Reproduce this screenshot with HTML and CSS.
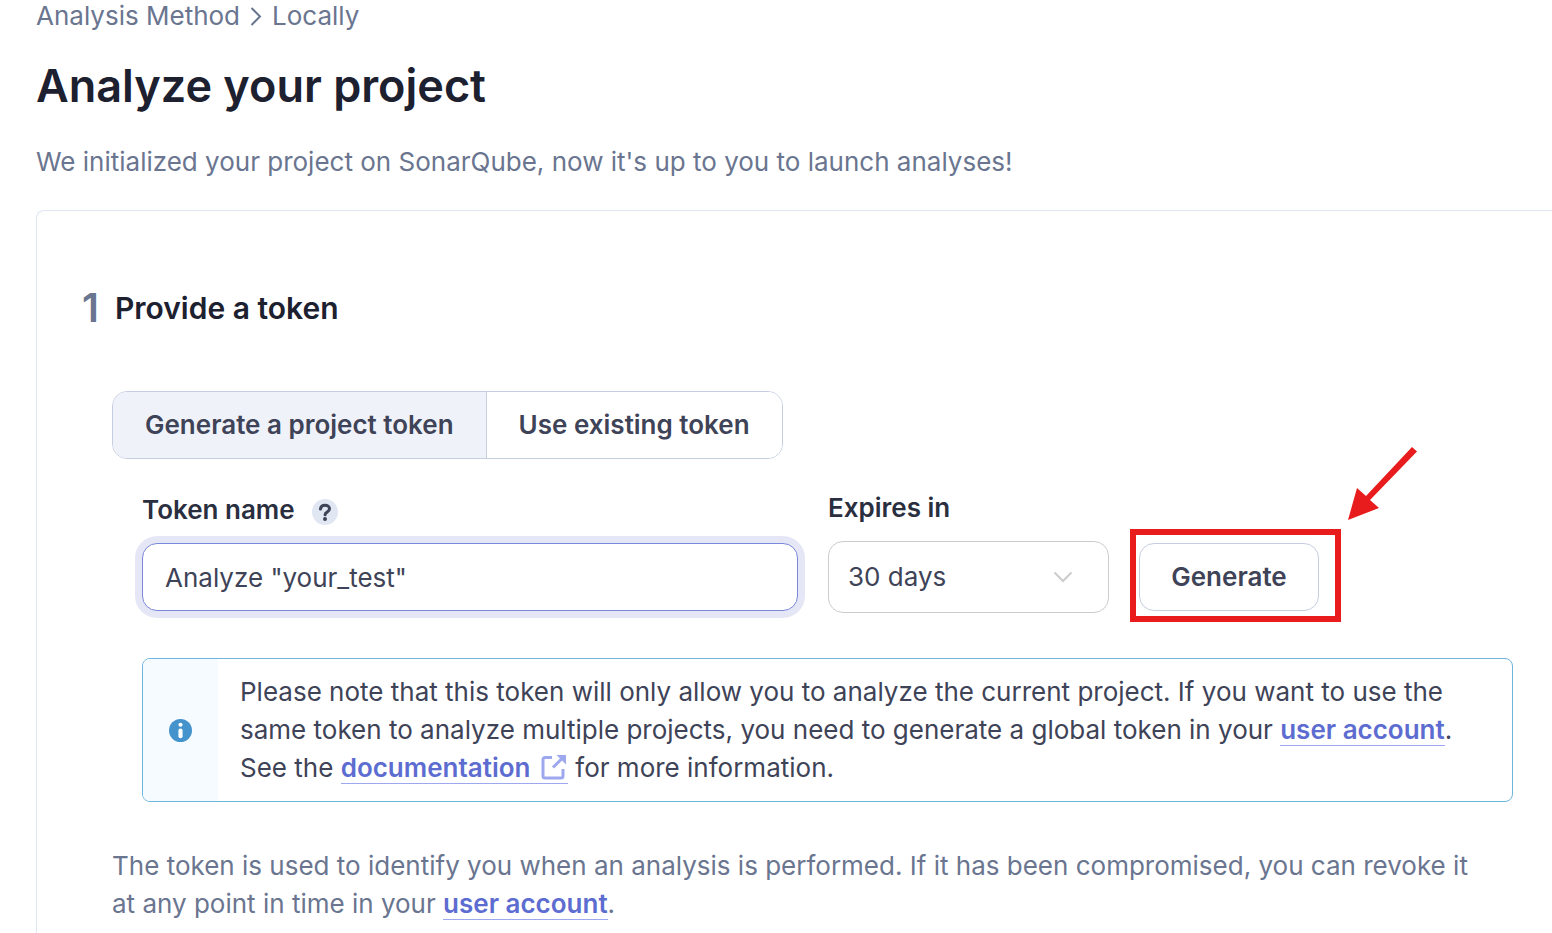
FILE: index.html
```html
<!DOCTYPE html>
<html lang="en">
<head>
<meta charset="utf-8">
<meta name="viewport" content="width=device-width, initial-scale=1">
<title>Analyze your project</title>
<link rel="stylesheet" href="styles.css">
</head>
<body>
<main class="page">
  <nav class="breadcrumb" aria-label="Breadcrumb">
    <a href="#">Analysis Method</a>
    <svg class="sep" viewBox="0 0 12 20" fill="none" stroke="currentColor" stroke-width="2"><path d="M1.5 2l8.5 8.5L1.5 19"/></svg>
    <a href="#">Locally</a>
  </nav>
  <h1>Analyze your project</h1>
  <p class="lead">We initialized your project on SonarQube, now it's up to you to launch analyses!</p>

  <section class="card">
    <h2 class="step"><span class="num">1</span> Provide a token</h2>

    <div class="body">
      <div class="toggle">
        <button type="button" class="on">Generate a project token</button>
        <button type="button">Use existing token</button>
      </div>

      <form class="fields">
        <div class="field name">
          <div class="label-row">
            <label for="token">Token name</label>
            <button type="button" class="help" aria-label="Help">
              <svg viewBox="0 0 26 26" fill="none"><path d="M8.500 10c.3-2.400 2.200-3.700 4.500-3.700 2.500 0 4.500 1.300 4.500 3.500 0 1.700-1 2.500-2.400 3.300-1.300.7-2 1.300-2 2.600" stroke="currentColor" stroke-width="3" stroke-linecap="round"/><circle cx="13" cy="20" r="2" fill="currentColor"/></svg>
            </button>
          </div>
          <input id="token" type="text" value='Analyze "your_test"'>
        </div>
        <div class="field expires">
          <label for="expires">Expires in</label>
          <div class="select">
            <select id="expires"><option>30 days</option><option>90 days</option><option>1 year</option></select>
            <svg viewBox="0 0 20 12" fill="none" stroke="currentColor" stroke-width="2"><path d="M1.500 1.500L10 10l8.500-8.500"/></svg>
          </div>
        </div>
        <div class="submit">
          <button type="button">Generate</button>
          <span class="mark"></span>
          <svg class="arrow" viewBox="0 0 72 76" fill="#e81c1c"><path d="M65 1l5 4.500L23 54l9 8L1 74l9-32 9 8z"/></svg>
        </div>
      </form>

      <div class="note">
        <div class="note-icon">
          <svg viewBox="0 0 22 22"><circle cx="11" cy="11" r="11" fill="#4493cc"/><circle cx="11" cy="5.500" r="2" fill="#fff"/><rect x="9" y="9" width="4" height="9.500" rx="2" fill="#fff"/></svg>
        </div>
        <p>Please note that this token will only allow you to analyze the current project. If you want to use the same token to analyze multiple projects, you need to generate a global token in your <a href="#">user account</a>. See the <a href="#">documentation <svg class="ext" viewBox="0 0 26 26" fill="none"><path d="M12 3.500H5A2 2 0 0 0 3 5.500V22a2 2 0 0 0 2 2h16a2 2 0 0 0 2-2v-7M13 13.500l9-9" stroke="currentColor" stroke-width="3"/><path d="M16.500 1H26v9.500z" fill="currentColor"/></svg></a> for more information.</p>
      </div>

      <p class="hint">The token is used to identify you when an analysis is performed. If it has been compromised, you can revoke it at any point in time in your <a href="#">user account</a>.</p>
    </div>
  </section>
</main>
</body>
</html>
```
FILE: styles.css
```css
*{box-sizing:border-box;}
html,body{margin:0;background:#fff;}
body{ font-family:Inter,"Liberation Sans",sans-serif; font-size:26px; line-height:38px; color:#3e4357; font-optical-sizing:none; }
h1,h2,p{margin:0;}
button,input,select{ font:inherit; color:inherit; }
button{ cursor:pointer; }

.page{ height:100vh; padding-left:36px; overflow:hidden; display:flex; flex-direction:column; }

.breadcrumb{ display:flex; align-items:center; gap:10px; line-height:32px; color:#6a7590; }
.breadcrumb a{ color:inherit; text-decoration:none; }
.breadcrumb .sep{ width:12px; height:20px; }
h1{ margin-top:26px; font-size:45px; line-height:56px; font-weight:600; color:#1d202f; }
.lead{ margin-top:29px; color:#6a7590; }

/* runs off the right and bottom edges */
.card{ flex:1 0 auto; margin-top:29px; padding:73px 39px 0 45px; border:1px solid #e1e6f3; border-width:1px 0 0 1px; border-top-left-radius:8px; }
.step{ display:flex; align-items:center; gap:16px; font-size:30px; line-height:48px; font-weight:600; color:#1d202f; }
.num{ font-size:40px; color:#6a7590; }
.body{ margin-top:59px; padding-left:30px; }

.toggle{ display:inline-flex; border:1px solid #c5cde0; border-radius:15px; overflow:hidden; vertical-align:top; }
.toggle button{ padding:14px 32px; border:0; background:#fff; font-weight:600; }
.toggle button + button{ border-left:1px solid #c5cde0; }
.toggle .on{ background:#eff2f9; }

.fields{ display:flex; align-items:center; gap:30px; margin:30px 0 45px; padding-left:30px; }
.field{ display:flex; flex-direction:column; gap:14px; }
.field label{ font-weight:600; color:#2a2f40; }
.name{ flex:0 1 656px; }
.expires{ flex:0 0 281px; }
.label-row{ display:flex; align-items:center; gap:17px; }
.help{ width:26px; height:26px; margin-top:4px; padding:0; border:0; border-radius:50%; background:#e1e6f3; color:#3e4357; }
.help svg{ display:block; }
.name input{ width:100%; height:68px; padding:0 22px; border:1px solid #7b87d9; border-radius:15px; outline:0; box-shadow:0 0 0 7px #e6e7f6; }
.select{ position:relative; }
.select select{ display:block; width:100%; height:72px; padding:0 19px; border:1px solid #ccc; border-radius:15px; background:#fff; appearance:none; }
.select svg{ position:absolute; right:36px; top:30px; width:20px; height:12px; color:#ccc; pointer-events:none; }

.submit{ position:relative; align-self:flex-end; margin-bottom:2px; }
.submit button{ display:block; width:180px; height:68px; padding:0; border:1px solid #c5cde0; border-radius:15px; background:#fff; font-weight:600; }
.mark{ position:absolute; inset:-14px -22px -11px -9px; border:6px solid #e81c1c; pointer-events:none; }
.arrow{ position:absolute; left:208px; top:-97px; width:72px; height:76px; }

.note{ display:flex; margin-left:30px; border:1px solid #6cb5dd; border-radius:8px; overflow:hidden; }
.note-icon{ flex:0 0 75px; display:flex; align-items:center; justify-content:center; background:#f5fbff; }
.note-icon svg{ width:23px; height:23px; }
.note p{ padding:14px 22px; }
.note a,.hint a{ font-weight:600; color:#5d6cd0; text-decoration:none; border-bottom:1px solid #9da8ef; }
.ext{ width:26px; height:26px; margin:0 2px 0 3px; vertical-align:-3px; color:#9da8ef; }

.hint{ margin-top:45px; padding-right:30px; color:#6a7590; }
```
